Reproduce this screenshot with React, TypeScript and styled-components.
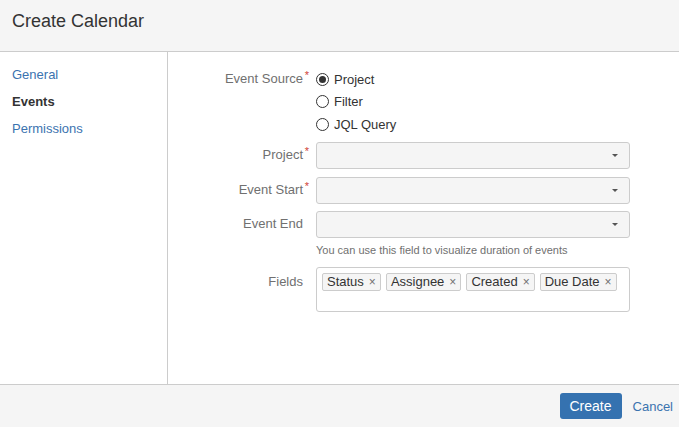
import styled, { createGlobalStyle } from "styled-components";

const GlobalStyle = createGlobalStyle`
    html, body {
        margin: 0;
        padding: 0;
    }
    body {
        font-family: "Liberation Sans", Arial, sans-serif;
        font-size: 13px;
        color: #333;
        background: #fff;
    }
    * {
        box-sizing: border-box;
    }
`;

const StyledDialog = styled.div`
    display: flex;
    flex-direction: column;
    width: 679px;
    height: 427px;
`;

const StyledHeader = styled.header`
    height: 52px;
    padding: 6px 12px 0;
    background: #f5f5f5;
    border-bottom: 1px solid #ccc;
`;

const StyledTitle = styled.h2`
    margin: 0;
    font-size: 18px;
    font-weight: normal;
    line-height: 30px;
    color: #333;
`;

const StyledBody = styled.div`
    display: flex;
    flex: 1;
    min-height: 0;
`;

const StyledSidebar = styled.nav`
    width: 168px;
    flex-shrink: 0;
    padding-top: 9px;
    border-right: 1px solid #ccc;
`;

const StyledNavItem = styled.div<{ $active?: boolean }>`
    padding: 0 12px;
    line-height: 27px;
    color: ${({ $active }) => ($active ? "#333" : "#3b73af")};
    font-weight: ${({ $active }) => ($active ? "bold" : "normal")};
`;

const StyledForm = styled.div`
    flex: 1;
    padding-top: 16px;
`;

const StyledRow = styled.div<{ $top: number; $align?: string }>`
    display: flex;
    align-items: ${({ $align }) => $align || "center"};
    margin-top: ${({ $top }) => $top}px;
`;

const StyledLabel = styled.div<{ $pad?: number }>`
    position: relative;
    width: 135px;
    flex-shrink: 0;
    margin-right: 13px;
    padding-top: ${({ $pad }) => $pad || 0}px;
    text-align: right;
    color: #707070;
    line-height: 22px;
`;

const StyledRequired = styled.span`
    position: absolute;
    top: -4px;
    right: -6px;
    color: #d04437;
    font-size: 11px;
`;

const StyledRadioList = styled.div`
    display: flex;
    flex-direction: column;
`;

const StyledRadioItem = styled.label`
    display: flex;
    align-items: center;
    height: 22.5px;
    color: #333;
`;

const StyledRadioCircle = styled.span<{ $checked?: boolean }>`
    display: flex;
    align-items: center;
    justify-content: center;
    width: 13px;
    height: 13px;
    margin-right: 5px;
    border: 1px solid #333;
    border-radius: 50%;
    background: #fff;
    &::after {
        content: "";
        width: 7px;
        height: 7px;
        border-radius: 50%;
        background: ${({ $checked }) => ($checked ? "#333" : "transparent")};
    }
`;

const StyledSelect = styled.div`
    display: flex;
    align-items: center;
    justify-content: flex-end;
    width: 314px;
    height: 27px;
    padding-right: 11px;
    background: #f5f5f5;
    border: 1px solid #ccc;
    border-radius: 3px;
`;

const StyledArrow = styled.span`
    width: 0;
    height: 0;
    border-left: 3px solid transparent;
    border-right: 3px solid transparent;
    border-top: 3px solid #555;
`;

const StyledHelp = styled.div`
    margin: 4px 0 0 148px;
    font-size: 11px;
    line-height: 16px;
    color: #707070;
`;

const StyledMultiSelect = styled.div`
    display: flex;
    flex-wrap: wrap;
    align-content: flex-start;
    gap: 5px;
    width: 314px;
    height: 45px;
    padding: 5px;
    border: 1px solid #ccc;
    border-radius: 3px;
    background: #fff;
`;

const StyledTag = styled.span`
    display: inline-flex;
    align-items: center;
    height: 18px;
    padding: 0 4px;
    background: #f5f5f5;
    border: 1px solid #ccc;
    border-radius: 2px;
    color: #333;
`;

const StyledTagRemove = styled.span`
    margin-left: 5px;
    font-size: 12px;
    color: #707070;
`;

const StyledFooter = styled.footer`
    display: flex;
    align-items: center;
    justify-content: flex-end;
    height: 43px;
    background: #f5f5f5;
    border-top: 1px solid #ccc;
`;

const StyledPrimaryButton = styled.button`
    height: 26px;
    padding: 0 10px;
    border: none;
    border-radius: 3px;
    background: #3572b0;
    color: #fff;
    font-family: inherit;
    font-size: 14px;
`;

const StyledLinkButton = styled.button`
    margin-left: 5px;
    padding: 0 6px;
    border: none;
    background: transparent;
    color: #3b73af;
    font-family: inherit;
    font-size: 13px;
`;

const fields = ["Status", "Assignee", "Created", "Due Date"];

function SelectRow({ label, top, required }: { label: string; top: number; required?: boolean }) {
    return (
        <StyledRow $top={top}>
            <StyledLabel>
                {label}
                {required && <StyledRequired>*</StyledRequired>}
            </StyledLabel>
            <StyledSelect>
                <StyledArrow />
            </StyledSelect>
        </StyledRow>
    );
}

export default function App() {
    return (
        <StyledDialog>
            <GlobalStyle />
            <StyledHeader>
                <StyledTitle>Create Calendar</StyledTitle>
            </StyledHeader>
            <StyledBody>
                <StyledSidebar>
                    <StyledNavItem>General</StyledNavItem>
                    <StyledNavItem $active>Events</StyledNavItem>
                    <StyledNavItem>Permissions</StyledNavItem>
                </StyledSidebar>
                <StyledForm>
                    <StyledRow $top={0} $align="flex-start">
                        <StyledLabel>
                            Event Source
                            <StyledRequired>*</StyledRequired>
                        </StyledLabel>
                        <StyledRadioList>
                            <StyledRadioItem>
                                <StyledRadioCircle $checked />
                                Project
                            </StyledRadioItem>
                            <StyledRadioItem>
                                <StyledRadioCircle />
                                Filter
                            </StyledRadioItem>
                            <StyledRadioItem>
                                <StyledRadioCircle />
                                JQL Query
                            </StyledRadioItem>
                        </StyledRadioList>
                    </StyledRow>
                    <SelectRow label="Project" top={6} required />
                    <SelectRow label="Event Start" top={8} required />
                    <SelectRow label="Event End" top={7} />
                    <StyledHelp>You can use this field to visualize duration of events</StyledHelp>
                    <StyledRow $top={9} $align="flex-start">
                        <StyledLabel $pad={4}>Fields</StyledLabel>
                        <StyledMultiSelect>
                            {fields.map((field) => (
                                <StyledTag key={field}>
                                    {field}
                                    <StyledTagRemove>×</StyledTagRemove>
                                </StyledTag>
                            ))}
                        </StyledMultiSelect>
                    </StyledRow>
                </StyledForm>
            </StyledBody>
            <StyledFooter>
                <StyledPrimaryButton>Create</StyledPrimaryButton>
                <StyledLinkButton>Cancel</StyledLinkButton>
            </StyledFooter>
        </StyledDialog>
    );
}
